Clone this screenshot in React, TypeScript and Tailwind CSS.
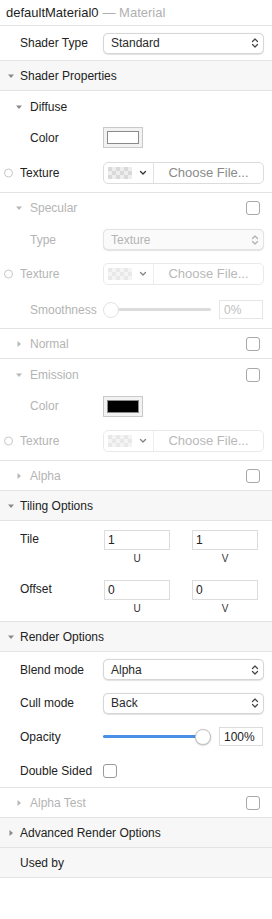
import React from 'react'

const FONT = { fontFamily: '"Liberation Sans", Arial, sans-serif' }

const Caret = ({ open, dim }: { open: boolean; dim?: boolean }) => (
  <svg width="8" height="8" viewBox="0 0 8 8" className={dim ? 'text-[#b8b8b8]' : 'text-[#8a8a8a]'}>
    {open ? <path d="M1 2.5h6L4 6z" fill="currentColor" /> : <path d="M2.5 1v6L6 4z" fill="currentColor" />}
  </svg>
)

const Checkbox = ({ dim }: { dim?: boolean }) => (
  <div className={`w-[14px] h-[14px] rounded-[3px] border bg-white ${dim ? 'border-[#a8a8a8]' : 'border-[#9a9a9a]'}`} />
)

const UpDown = ({ dim }: { dim?: boolean }) => (
  <svg width="8" height="12" viewBox="0 0 8 12" fill="none" stroke={dim ? '#b0b0b0' : '#444'} strokeWidth="1.2" strokeLinecap="round" strokeLinejoin="round">
    <path d="M1.5 4.5L4 2l2.5 2.5" />
    <path d="M1.5 7.5L4 10l2.5-2.5" />
  </svg>
)

const Select = ({ value, dim }: { value: string; dim?: boolean }) => (
  <div
    className={`flex-1 h-[21px] flex items-center justify-between pl-[7px] pr-[4px] rounded-[5px] border shadow-[0_0.5px_1px_rgba(0,0,0,0.12)] ${
      dim ? 'border-[#e4e4e4] bg-[#fafafa] text-[#b4b4b4]' : 'border-[#d6d6d6] bg-white text-[#2a2a2a]'
    }`}
  >
    <span>{value}</span>
    <UpDown dim={dim} />
  </div>
)

const Checker = () => (
  <div className="grid grid-cols-6 w-[24px] h-[12px]">
    {Array.from({ length: 18 }).map((_, i) => (
      <div key={i} className={(Math.floor(i / 6) + (i % 6)) % 2 === 0 ? 'bg-[#d9d9d9]' : 'bg-[#eeeeee]'} />
    ))}
  </div>
)

const TexturePicker = ({ dim }: { dim?: boolean }) => (
  <div className={`flex-1 h-[22px] flex items-stretch rounded-[5px] border border-[#dcdcdc] bg-white ${dim ? 'opacity-60' : ''}`}>
    <div className="flex items-center gap-[7px] pl-[4px] pr-[6px] border-r border-[#e2e2e2]">
      <Checker />
      <svg width="8" height="6" viewBox="0 0 8 6" fill="none" stroke="#333" strokeWidth="1.3" strokeLinecap="round" strokeLinejoin="round">
        <path d="M1.5 1.5L4 4l2.5-2.5" />
      </svg>
    </div>
    <div className="flex-1 flex items-center justify-center text-[#8a8a8a] text-[13px]">Choose File...</div>
  </div>
)

const Radio = () => <div className="w-[9px] h-[9px] rounded-full border border-[#c8c8c8] bg-white" />

const Header = ({ title, open, caret = true }: { title: string; open?: boolean; caret?: boolean }) => (
  <div className="h-[30px] flex items-center bg-[#f7f7f7] border-b border-[#e3e3e3] text-[#222]">
    <div className="w-[20px] flex justify-center pl-[2px]">{caret && <Caret open={!!open} />}</div>
    <span>{title}</span>
  </div>
)

const SubHeader = ({ title, open, dim, h, border }: { title: string; open: boolean; dim?: boolean; h: string; border?: boolean }) => (
  <div className={`${h} flex items-center pr-[12px] ${border ? 'border-b border-[#e3e3e3]' : ''}`}>
    <div className="w-[30px] flex justify-end pr-[7px]"><Caret open={open} dim={dim} /></div>
    <span className={`flex-1 ${dim ? 'text-[#b4b4b4]' : 'text-[#222]'}`}>{title}</span>
    {dim && <Checkbox dim />}
  </div>
)

const Row = ({ label, indent, dim, radio, h, border, children }: {
  label: string; indent?: boolean; dim?: boolean; radio?: boolean; h: string; border?: boolean; children?: React.ReactNode
}) => (
  <div className={`${h} flex items-center pr-[8px] ${border ? 'border-b border-[#e3e3e3]' : ''}`}>
    <div className={`w-[103px] shrink-0 flex items-center ${indent ? 'pl-[30px]' : 'pl-[20px]'} relative`}>
      {radio && <div className="absolute left-[4px] top-1/2 -translate-y-1/2"><Radio /></div>}
      <span className={dim ? 'text-[#b4b4b4]' : 'text-[#222]'}>{label}</span>
    </div>
    <div className="flex-1 flex items-center">{children}</div>
  </div>
)

const Swatch = ({ color }: { color: string }) => (
  <div className="w-[40px] h-[21px] border border-[#c9c9c9] bg-[#f2f2f2] flex items-center justify-center">
    <div className={`w-[32px] h-[13px] border border-[#8a8a8a] ${color}`} />
  </div>
)

const NumBox = ({ value, dim, w = 'w-[44px]' }: { value: string; dim?: boolean; w?: string }) => (
  <div className={`${w} h-[19px] border flex items-center pl-[4px] bg-white ${dim ? 'border-[#e6e6e6] text-[#c0c0c0]' : 'border-[#dcdcdc] text-[#222]'}`}>
    {value}
  </div>
)

const Slider = ({ pct, dim }: { pct: number; dim?: boolean }) => (
  <div className="w-[108px] h-[16px] relative flex items-center mr-[8px]">
    <div className="absolute left-0 right-0 h-[3px] rounded-full bg-[#dcdcdc]" />
    <div className={`absolute left-0 h-[3px] rounded-full ${dim ? 'bg-[#dcdcdc]' : 'bg-[#4a8ee6]'}`} style={{ width: `${pct}%` }} />
    <div
      className={`absolute w-[16px] h-[16px] rounded-full bg-white border ${dim ? 'border-[#e2e2e2]' : 'border-[#c4c4c4] shadow-[0_0.5px_1.5px_rgba(0,0,0,0.25)]'}`}
      style={{ left: `calc(${pct}% - ${pct / 100 * 16}px)` }}
    />
  </div>
)

const UVPair = ({ label, u, v }: { label: string; u: string; v: string }) => (
  <div className="h-[50px] flex pt-[9px] pr-[14px]">
    <div className="w-[104px] pl-[20px] text-[#222]">{label}</div>
    <div className="flex-1 grid grid-cols-2 gap-[22px]">
      {[u, v].map((val, i) => (
        <div key={i} className="flex flex-col items-center">
          <div className="w-full h-[20px] border border-[#dcdcdc] bg-white flex items-center pl-[3px] text-[#222]">{val}</div>
          <span className="text-[10px] text-[#333] mt-[1px]">{i === 0 ? 'U' : 'V'}</span>
        </div>
      ))}
    </div>
  </div>
)

export default function App() {
  return (
    <div className="w-[272px] h-[919px] bg-white text-[12px] overflow-hidden" style={FONT}>
      <div className="h-[26px] flex items-center pl-[6px] border-b border-[#e3e3e3] text-[13px]">
        <span className="text-[#1e1e1e]">defaultMaterial0</span>
        <span className="text-[#b0b0b0] ml-[4px]">— Material</span>
      </div>
      <Row label="Shader Type" h="h-[35px]" border>
        <Select value="Standard" />
      </Row>

      <Header title="Shader Properties" open />
      <SubHeader title="Diffuse" open h="h-[31px]" />
      <Row label="Color" indent h="h-[31px]">
        <Swatch color="bg-white" />
      </Row>
      <Row label="Texture" radio h="h-[40px]" border>
        <TexturePicker />
      </Row>

      <SubHeader title="Specular" open dim h="h-[30px]" />
      <Row label="Type" indent dim h="h-[33px]">
        <Select value="Texture" dim />
      </Row>
      <Row label="Texture" radio dim h="h-[35px]">
        <TexturePicker dim />
      </Row>
      <Row label="Smoothness" indent dim h="h-[38px]" border>
        <Slider pct={0} dim />
        <NumBox value="0%" dim />
      </Row>

      <SubHeader title="Normal" open={false} dim h="h-[30px]" border />
      <SubHeader title="Emission" open dim h="h-[32px]" />
      <Row label="Color" indent dim h="h-[30px]">
        <Swatch color="bg-black" />
      </Row>
      <Row label="Texture" radio dim h="h-[40px]" border>
        <TexturePicker dim />
      </Row>
      <SubHeader title="Alpha" open={false} dim h="h-[30px]" border />

      <Header title="Tiling Options" open />
      <UVPair label="Tile" u="1" v="1" />
      <div className="border-b border-[#e3e3e3]">
        <UVPair label="Offset" u="0" v="0" />
      </div>

      <Header title="Render Options" open />
      <Row label="Blend mode" h="h-[35px]">
        <Select value="Alpha" />
      </Row>
      <Row label="Cull mode" h="h-[32px]">
        <Select value="Back" />
      </Row>
      <Row label="Opacity" h="h-[35px]">
        <Slider pct={100} />
        <NumBox value="100%" />
      </Row>
      <Row label="Double Sided" h="h-[34px]" border>
        <Checkbox />
      </Row>
      <SubHeader title="Alpha Test" open={false} dim h="h-[30px]" border />

      <Header title="Advanced Render Options" />
      <Header title="Used by" caret={false} />
    </div>
  )
}
